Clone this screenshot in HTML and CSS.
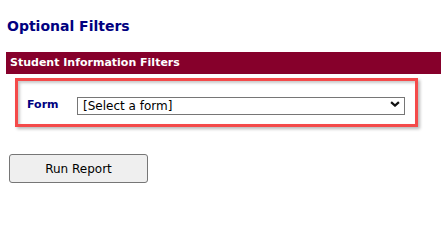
FILE: index.html
```html
<!DOCTYPE html>
<html>
<head>
<meta charset="utf-8">
<link rel="stylesheet" href="styles.css">
</head>
<body>
<div class="page">
  <h2 class="title">Optional Filters</h2>
  <div class="bar">Student Information Filters</div>
  <div class="highlight">
    <div class="row">
      <label class="label" for="form">Form</label>
      <div class="select-wrap">
        <select id="form" class="select">
          <option>[Select a form]</option>
        </select>
        <svg class="chev" width="10" height="6" viewBox="0 0 10 6"><path d="M1.1 1.1 L5 4.6 L8.9 1.1" fill="none" stroke="#111" stroke-width="2.2"/></svg>
      </div>
    </div>
  </div>
  <div class="actions">
    <button class="btn">Run Report</button>
  </div>
</div>
</body>
</html>
```
FILE: styles.css
```css
html, body {
  margin: 0;
  padding: 0;
  background: #fff;
}
.page {
  padding-left: 6px;
  font-family: "DejaVu Sans", Verdana, sans-serif;
}
.title {
  margin: 0;
  padding-top: 17px;
  padding-left: 1px;
  font-size: 14px;
  line-height: 18px;
  font-weight: bold;
  color: #000080;
}
.bar {
  margin-top: 17px;
  height: 22px;
  line-height: 22px;
  background: #86002b;
  color: #fff;
  font-size: 11px;
  font-weight: bold;
  padding-left: 4px;
}
.highlight {
  margin: 4px 0 0 9px;
  width: 378px;
  height: 43px;
  border: 3px solid #f44a4a;
  box-shadow: 2px 2px 3px rgba(0,0,0,0.28), inset 2px 2px 3px rgba(0,0,0,0.22);
  padding: 0 10px 0 9px;
  box-sizing: content-box;
}
.row {
  display: flex;
  align-items: center;
  height: 18px;
  margin-top: 14px;
}
.label {
  width: 50px;
  font-size: 11px;
  font-weight: bold;
  color: #000080;
}
.select-wrap {
  position: relative;
  width: 328px;
  height: 18px;
}
.select {
  appearance: none;
  -webkit-appearance: none;
  width: 328px;
  height: 18px;
  margin: 0;
  padding: 0 0 0 5px;
  border: 1px solid #767676;
  border-radius: 0;
  background: #fff;
  font-family: "DejaVu Sans", Verdana, sans-serif;
  font-size: 12px;
  line-height: 16px;
  color: #000;
}
.chev {
  position: absolute;
  left: 313px;
  top: 6px;
  pointer-events: none;
}
.actions {
  margin-top: 27px;
  padding-left: 3px;
}
.btn {
  width: 139px;
  height: 29px;
  margin: 0;
  padding: 0;
  border: 1px solid #767676;
  border-radius: 3px;
  background: #efefef;
  font-family: "DejaVu Sans", Verdana, sans-serif;
  font-size: 12px;
  color: #000;
}
```
